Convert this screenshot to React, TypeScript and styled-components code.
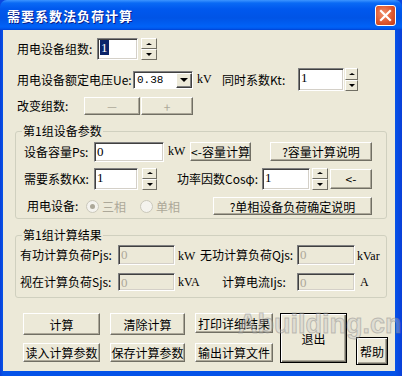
import styled, { createGlobalStyle } from 'styled-components';

const GlobalStyle = createGlobalStyle`
  * { box-sizing: border-box; }
  body {
    margin: 0;
    font-family: "Noto Sans CJK SC", "Noto Sans", sans-serif;
    font-size: 12px;
    color: #000;
  }
`;

const CJK = `"Noto Sans CJK SC", "Noto Sans", sans-serif`;

export default function App() {
  return (
    <>
      <GlobalStyle />
      <Window>
        <TitleBar>
          <Title>需要系数法负荷计算</Title>
          <CloseButton>
            <svg width="13" height="13" viewBox="0 0 13 13">
              <path d="M2 2 L11 11 M11 2 L2 11" stroke="#fff" strokeWidth="2.2" strokeLinecap="square" />
            </svg>
          </CloseButton>
        </TitleBar>

        <Frame>
          <Client>
            <Row $h={22} $mt={8}>
              <Label $ml={14} $w={80}>用电设备组数:</Label>
              <TextBox $w={41} $h={22}>
                <Selected>1</Selected>
              </TextBox>
              <Spinner $ml={3} $w={16} $h={22} />
            </Row>

            <Row $h={23} $mt={8}>
              <Label $ml={14} $w={116}>用电设备额定电压Ue:</Label>
              <Combo>
                <ComboText>0.38</ComboText>
                <ComboButton>
                  <ArrowDown $size={4} />
                </ComboButton>
              </Combo>
              <Unit $ml={4} $w={25}>kV</Unit>
              <Label $w={76}>同时系数Kt:</Label>
              <TextBox $w={46} $h={23}>1</TextBox>
              <Spinner $ml={1} $w={13} $h={23} />
            </Row>

            <Row $h={18} $mt={6}>
              <Label $ml={14} $w={67}>改变组数:</Label>
              <Button $w={56} $h={18} $disabled>
                －
              </Button>
              <Button $ml={1} $w={52} $h={18} $disabled>
                +
              </Button>
            </Row>

            <Group $h={88} $mt={16}>
              <Legend>第1组设备参数</Legend>

              <Row $h={21} $mt={9}>
                <Label $ml={8} $w={70}>设备容量Ps:</Label>
                <TextBox $w={70} $h={20}>0</TextBox>
                <Unit $ml={4} $w={22}>kW</Unit>
                <Button $w={61} $h={19}>&lt;-容量计算</Button>
                <Button $ml={19} $w={102} $h={19}>?容量计算说明</Button>
              </Row>

              <Row $h={23} $mt={5}>
                <Label $ml={8} $w={70}>需要系数Kx:</Label>
                <TextBox $w={44} $h={22}>1</TextBox>
                <Spinner $ml={4} $w={15} $h={22} />
                <Label $ml={20} $w={85}>功率因数Cosφ:</Label>
                <TextBox $w={48} $h={22}>1</TextBox>
                <Spinner $ml={2} $w={16} $h={22} />
                <Button $ml={2} $w={42} $h={20}>&lt;-</Button>
              </Row>

              <Row $h={18} $mt={7}>
                <Label $ml={11} $w={59}>用电设备:</Label>
                <RadioItem $w={54}>
                  <RadioDot $checked />
                  三相
                </RadioItem>
                <RadioItem $w={73}>
                  <RadioDot />
                  单相
                </RadioItem>
                <Button $w={159} $h={18}>?单相设备负荷确定说明</Button>
              </Row>
            </Group>

            <Group $h={63} $mt={16}>
              <Legend>第1组计算结果</Legend>

              <Row $h={20} $mt={9}>
                <Label $ml={4} $w={98}>有功计算负荷Pjs:</Label>
                <TextBox $w={57} $h={20} $disabled>0</TextBox>
                <Unit $ml={3} $w={22} $low>kW</Unit>
                <Label $w={97}>无功计算负荷Qjs:</Label>
                <TextBox $w={58} $h={20} $disabled>0</TextBox>
                <Unit $ml={2} $w={30} $low>kVar</Unit>
              </Row>

              <Row $h={18} $mt={8}>
                <Label $ml={4} $w={98}>视在计算负荷Sjs:</Label>
                <TextBox $w={57} $h={18} $disabled>0</TextBox>
                <Unit $ml={3} $w={44} $low>kVA</Unit>
                <Label $w={75}>计算电流Ijs:</Label>
                <TextBox $w={58} $h={18} $disabled>0</TextBox>
                <Unit $ml={5} $w={20} $low>A</Unit>
              </Row>
            </Group>

            <Footer>
              <ButtonGrid>
                <Button $w={77} $h={22}>计算</Button>
                <Button $w={75} $h={22}>清除计算</Button>
                <Button $w={78} $h={20}>打印详细结果</Button>
                <Button $w={77} $h={19}>读入计算参数</Button>
                <Button $w={75} $h={19}>保存计算参数</Button>
                <Button $w={78} $h={19}>输出计算文件</Button>
              </ButtonGrid>
              <Button $ml={7} $w={67} $h={50} $strong>退出</Button>
              <Button $ml={9} $mt={24} $w={32} $h={28} $strong>帮助</Button>
            </Footer>
          </Client>
        </Frame>

        <Watermark>Abuilding.cn</Watermark>
      </Window>
    </>
  );
}

function Spinner({ $ml, $w, $h }: { $ml?: number; $w: number; $h: number }) {
  return (
    <SpinStack $ml={$ml} $w={$w} $h={$h}>
      <SpinButton>
        <ArrowUp $size={3} />
      </SpinButton>
      <SpinButton>
        <ArrowDown $size={3} />
      </SpinButton>
    </SpinStack>
  );
}

const Window = styled.div`
  position: relative;
  width: 402px;
  height: 376px;
  display: flex;
  flex-direction: column;
  background: #0a47e0;
  overflow: hidden;
`;

const TitleBar = styled.div`
  height: 30px;
  display: flex;
  align-items: center;
  justify-content: space-between;
  padding: 0 6px 0 7px;
  border-radius: 7px 7px 0 0;
  background: linear-gradient(
    to bottom,
    #3d95ff 0%,
    #0a6af5 10%,
    #0058ee 30%,
    #0054e6 60%,
    #0062f7 88%,
    #005bf0 94%,
    #0042d4 100%
  );
`;

const Title = styled.div`
  color: #fff;
  font-family: ${CJK};
  font-size: 13px;
  font-weight: 700;
  letter-spacing: 1px;
  text-shadow: 1px 1px 0 #0a1e8a;
  margin-top: 1px;
`;

const CloseButton = styled.div`
  width: 21px;
  height: 21px;
  margin-top: 1px;
  display: flex;
  align-items: center;
  justify-content: center;
  border: 1px solid #fff;
  border-radius: 3px;
  background: radial-gradient(circle at 40% 40%, #f0926f 0%, #e0582f 55%, #c23b16 100%);
`;

const Frame = styled.div`
  flex: 1;
  padding: 0 7px 5px 3px;
  background: linear-gradient(to right, #0a3fd8 0, #0553e8 3px, #0553e8 calc(100% - 7px), #0a3fd8 100%);
`;

const Client = styled.div`
  height: 100%;
  background: #ece9d8;
  display: flex;
  flex-direction: column;
`;

const Row = styled.div<{ $h: number; $mt: number }>`
  display: flex;
  align-items: center;
  height: ${(p) => p.$h}px;
  margin-top: ${(p) => p.$mt}px;
  flex-shrink: 0;
`;

const Label = styled.div<{ $ml?: number; $w: number }>`
  margin-left: ${(p) => p.$ml || 0}px;
  width: ${(p) => p.$w}px;
  flex-shrink: 0;
  font-family: ${CJK};
  font-size: 12px;
  line-height: 14px;
  white-space: nowrap;
`;

const Unit = styled.div<{ $ml?: number; $w: number; $low?: boolean }>`
  margin-left: ${(p) => p.$ml || 0}px;
  width: ${(p) => p.$w}px;
  flex-shrink: 0;
  font-family: "Liberation Serif", serif;
  font-size: 12px;
  align-self: ${(p) => (p.$low ? 'flex-end' : 'center')};
  padding-bottom: ${(p) => (p.$low ? 1 : 0)}px;
`;

const TextBox = styled.div<{ $w: number; $h: number; $disabled?: boolean }>`
  width: ${(p) => p.$w}px;
  height: ${(p) => p.$h}px;
  flex-shrink: 0;
  padding: 1px 0 0 2px;
  background: ${(p) => (p.$disabled ? '#ece9d8' : '#fff')};
  color: ${(p) => (p.$disabled ? '#aca899' : '#000')};
  border-style: solid;
  border-width: 1px;
  border-color: #808080 #fff #fff #808080;
  box-shadow: inset 1px 1px 0 #404040, inset -1px -1px 0 #d4d0c8;
  font-family: "Liberation Serif", serif;
  font-size: 13px;
  line-height: 15px;
`;

const Selected = styled.span`
  background: #0a246a;
  color: #fff;
  padding: 0 1px;
`;

const SpinStack = styled.div<{ $ml?: number; $w: number; $h: number }>`
  margin-left: ${(p) => p.$ml || 0}px;
  width: ${(p) => p.$w}px;
  height: ${(p) => p.$h}px;
  flex-shrink: 0;
  display: flex;
  flex-direction: column;
`;

const SpinButton = styled.div`
  flex: 1;
  display: flex;
  align-items: center;
  justify-content: center;
  background: #ece9d8;
  border-style: solid;
  border-width: 1px;
  border-color: #fff #716f64 #716f64 #fff;
`;

const ArrowUp = styled.span<{ $size: number }>`
  width: 0;
  height: 0;
  border-left: ${(p) => p.$size}px solid transparent;
  border-right: ${(p) => p.$size}px solid transparent;
  border-bottom: ${(p) => p.$size - 1}px solid #000;
`;

const ArrowDown = styled.span<{ $size: number }>`
  width: 0;
  height: 0;
  border-left: ${(p) => p.$size}px solid transparent;
  border-right: ${(p) => p.$size}px solid transparent;
  border-top: ${(p) => p.$size}px solid #000;
`;

const Combo = styled.div`
  width: 60px;
  height: 18px;
  flex-shrink: 0;
  display: flex;
  align-items: stretch;
  background: #fff;
  border-style: solid;
  border-width: 1px;
  border-color: #808080 #fff #fff #808080;
  box-shadow: inset 1px 1px 0 #404040;
`;

const ComboText = styled.div`
  flex: 1;
  padding: 1px 0 0 3px;
  font-family: "Liberation Mono", monospace;
  font-size: 11px;
  line-height: 14px;
`;

const ComboButton = styled.div`
  width: 16px;
  margin: 1px 0 0;
  display: flex;
  align-items: center;
  justify-content: center;
  background: #ece9d8;
  border-style: solid;
  border-width: 1px;
  border-color: #fff #404040 #404040 #fff;
  box-shadow: inset -1px -1px 0 #808080;
`;

const Button = styled.div<{
  $ml?: number;
  $mt?: number;
  $w: number;
  $h: number;
  $disabled?: boolean;
  $strong?: boolean;
}>`
  margin-left: ${(p) => p.$ml || 0}px;
  margin-top: ${(p) => p.$mt || 0}px;
  width: ${(p) => p.$w}px;
  height: ${(p) => p.$h}px;
  flex-shrink: 0;
  display: flex;
  align-items: center;
  justify-content: center;
  background: #ece9d8;
  color: ${(p) => (p.$disabled ? '#aca899' : '#000')};
  font-family: ${CJK};
  font-size: 12px;
  white-space: nowrap;
  border-style: solid;
  border-width: 1px;
  border-color: ${(p) => (p.$strong ? '#000' : '#fff #716f64 #716f64 #fff')};
  box-shadow: ${(p) =>
    p.$strong
      ? 'inset 1px 1px 0 #fff, inset -1px -1px 0 #716f64, inset -2px -2px 0 #aca899'
      : 'inset -1px -1px 0 #aca899'};
`;

const Group = styled.div<{ $h: number; $mt: number }>`
  position: relative;
  margin: ${(p) => p.$mt}px 0 0 12px;
  width: 372px;
  height: ${(p) => p.$h}px;
  flex-shrink: 0;
  border: 1px solid #d0d0bf;
  border-radius: 3px;
  display: flex;
  flex-direction: column;
`;

const Legend = styled.div`
  position: absolute;
  top: -8px;
  left: 6px;
  padding: 0 1px;
  background: #ece9d8;
  font-family: ${CJK};
  font-size: 12px;
  line-height: 14px;
`;

const RadioItem = styled.div<{ $w: number }>`
  width: ${(p) => p.$w}px;
  flex-shrink: 0;
  display: flex;
  align-items: center;
  gap: 3px;
  color: #aca899;
  font-family: ${CJK};
  font-size: 12px;
`;

const RadioDot = styled.span<{ $checked?: boolean }>`
  width: 13px;
  height: 13px;
  border-radius: 50%;
  border: 1px solid #cac8bb;
  background: #f4f3ee;
  display: flex;
  align-items: center;
  justify-content: center;

  &::after {
    content: '';
    width: 5px;
    height: 5px;
    border-radius: 50%;
    background: ${(p) => (p.$checked ? '#aca899' : 'transparent')};
  }
`;

const Footer = styled.div`
  display: flex;
  align-items: flex-start;
  margin: 15px 0 0 20px;
`;

const ButtonGrid = styled.div`
  display: grid;
  grid-template-columns: 77px 75px 78px;
  grid-template-rows: 22px 19px;
  column-gap: 10px;
  row-gap: 8px;
  align-items: start;
`;

// faint site watermark that sits over the footer buttons
const Watermark = styled.div`
  position: absolute;
  left: 238px;
  top: 309px;
  font-family: "Liberation Sans", sans-serif;
  font-weight: 700;
  font-size: 27px;
  color: rgba(200, 200, 200, 0.35);
  -webkit-text-stroke: 1px rgba(120, 120, 120, 0.4);
  pointer-events: none;
  white-space: nowrap;
`;
